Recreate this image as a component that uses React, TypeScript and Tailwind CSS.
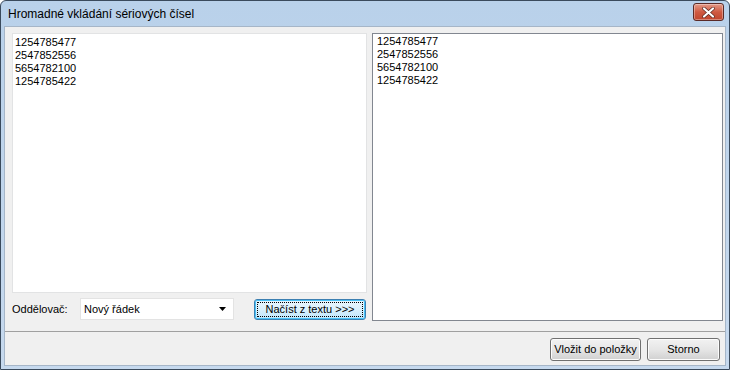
const numbers = ['1254785477', '2547852556', '5654782100', '1254785422']

function WinButton({ label, className = '' }: { label: string; className?: string }) {
  return (
    <button
      className={`h-[23px] rounded-[3px] border border-[#707070] bg-gradient-to-b from-[#f2f2f2] via-[#e6e6e6] to-[#d0d0d0] text-[11px] text-black shadow-[inset_0_0_0_1px_#fcfcfc] ${className}`}
    >
      {label}
    </button>
  )
}

export default function App() {
  return (
    <div
      className="w-[730px] h-[370px] bg-white"
      style={{ fontFamily: "'Liberation Sans', Arial, sans-serif" }}
    >
      <div className="w-full h-full flex flex-col rounded-t-[6px] border border-[#3a4a5c] bg-gradient-to-b from-[#b9d1ea] to-[#c6d9ee] overflow-hidden">
        {/* title bar */}
        <div className="h-[25px] flex items-center pl-[7px] pr-[5px] shrink-0">
          <span className="text-[12px] text-black flex-1">Hromadné vkládání sériových čísel</span>
          <div className="w-[31px] h-[18px] -mt-[3px] rounded-[3px] border border-[#5a2a26] bg-gradient-to-b from-[#e39a88] via-[#cf5a42] to-[#c0452d] flex items-center justify-center shadow-[inset_0_0_0_1px_rgba(255,255,255,0.35)]">
            <svg width="13" height="11" viewBox="0 0 13 11">
              <path d="M2 1.5 L11 9.5 M11 1.5 L2 9.5" stroke="#5b2a22" strokeWidth="3.6" strokeLinecap="round" />
              <path d="M2 1.5 L11 9.5 M11 1.5 L2 9.5" stroke="#ffffff" strokeWidth="2.2" strokeLinecap="round" />
            </svg>
          </div>
        </div>

        {/* client area */}
        <div className="flex-1 mx-[3px] mb-[3px] flex flex-col bg-[#f0f0f0] border border-[#a6b6c8]">
          <div className="flex-1 flex pt-[6px] pl-[7px] pr-[2px] gap-[5px]">
            {/* left column */}
            <div className="w-[356px] flex flex-col">
              <div className="h-[260px] bg-white border border-[#e2e3e4] pl-[2px] pt-[2px] text-[11px] leading-[13px] text-black">
                {numbers.map(n => (
                  <div key={n}>{n}</div>
                ))}
              </div>
              <div className="flex items-center mt-[5px]">
                <span className="text-[11px] text-black w-[68px]">Oddělovač:</span>
                <div className="w-[154px] h-[22px] bg-white border border-[#e3e3e3] flex items-center pl-[3px] pr-[7px]">
                  <span className="text-[11px] text-black flex-1">Nový řádek</span>
                  <svg width="7" height="4" viewBox="0 0 7 4">
                    <path d="M0 0 H7 L3.5 4 Z" fill="#000" />
                  </svg>
                </div>
                <button className="ml-[20px] w-[112px] h-[21px] rounded-[3px] border border-[#3c7fb1] bg-gradient-to-b from-[#eaf6fd] via-[#d9f0fc] to-[#bee6fd] shadow-[inset_0_0_0_1px_#48c2f7] p-[2px]">
                  <span className="block h-full border border-dotted border-black text-[11px] leading-[13px] text-black">
                    Načíst z textu &gt;&gt;&gt;
                  </span>
                </button>
              </div>
            </div>
            {/* right column */}
            <div className="w-[352px] h-[288px] bg-white border border-[#828790] px-[4px] pt-[1px] text-[11px] leading-[13px] text-black">
              {numbers.map(n => (
                <div key={n}>{n}</div>
              ))}
            </div>
          </div>
          <div className="mt-[9px] border-t border-[#a0a0a0] h-[34px] flex items-center justify-end gap-[6px] pr-[5px] pt-[1px]">
            <WinButton label="Vložit do položky" className="w-[91px]" />
            <WinButton label="Storno" className="w-[73px]" />
          </div>
        </div>
      </div>
    </div>
  )
}
